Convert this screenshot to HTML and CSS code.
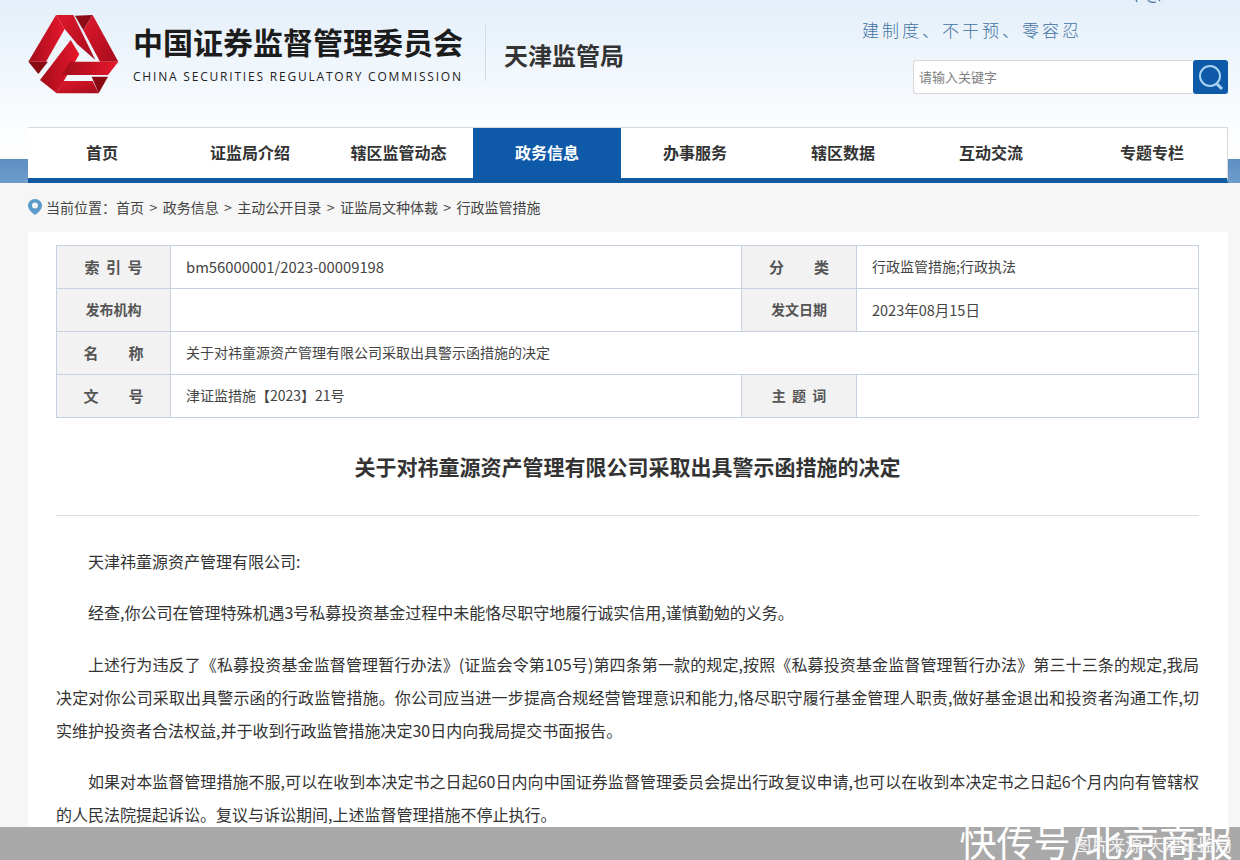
FILE: index.html
```html
<!DOCTYPE html>
<html lang="zh-CN">
<head>
    <meta charset="UTF-8">
    <title>关于对祎童源资产管理有限公司采取出具警示函措施的决定</title>
    <link rel="stylesheet" href="styles.css">
</head>
<body>
    <svg class="top-scrap" viewBox="0 0 30 3" width="30" height="3">
        <path d="M1 0l1 2M13 0c1 2 5 3 8 2M24 0l1 1" fill="none" stroke="#3f72a3" stroke-width="1.200"/>
    </svg>
    <header class="top">
        <div class="brand">
            <svg class="logo" viewBox="0 0 330 300" width="110" height="100">
                <defs>
                    <linearGradient id="redA" x1="0" y1="0" x2="1" y2="1">
                        <stop offset="0" stop-color="#e0182c"/>
                        <stop offset="1" stop-color="#a50d1c"/>
                    </linearGradient>
                    <linearGradient id="redB" x1="0" y1="0" x2="1" y2="0">
                        <stop offset="0" stop-color="#a30d1b"/>
                        <stop offset="1" stop-color="#e8172c"/>
                    </linearGradient>
                </defs>
                <polygon points="108,30 134,72 78,170 25,170" fill="url(#redB)"/>
                <polygon points="25,170 84,170 55,207" fill="#8a0a14"/>
                <polygon points="108,30 160,30 226,165 172,118 134,72" fill="url(#redA)"/>
                <polygon points="165,32 218,30 190,76" fill="#8c0b16"/>
                <polygon points="218,30 295,170 240,170 190,76" fill="url(#redA)"/>
                <polygon points="152,105 178,148 110,265 60,225" fill="url(#redB)"/>
                <polygon points="150,170 295,170 264,210 125,210" fill="url(#redB)"/>
                <polygon points="110,265 130,228 218,228 236,265" fill="url(#redA)"/>
                <polygon points="215,215 264,215 236,265" fill="#8a0a14"/>
            </svg>
            <div class="brand-name">
                <div class="brand-cn">中国证券监督管理委员会</div>
                <div class="brand-en">CHINA SECURITIES REGULATORY COMMISSION</div>
            </div>
            <div class="brand-sub">天津监管局</div>
        </div>
        <div class="top-right">
            <div class="slogan">建制度、不干预、零容忍</div>
            <div class="search">
                <div class="search-input">请输入关键字</div>
                <button class="search-btn">
                    <svg viewBox="0 0 35 34" width="35" height="34">
                        <circle cx="17" cy="16" r="10" fill="none" stroke="#a9d3f2" stroke-width="2"/>
                        <line x1="24" y1="24" x2="29" y2="29" stroke="#a9d3f2" stroke-width="3"/>
                    </svg>
                </button>
            </div>
        </div>
    </header>

    <div class="nav-wrap">
        <nav class="nav">
            <a>首页</a>
            <a>证监局介绍</a>
            <a>辖区监管动态</a>
            <a class="active">政务信息</a>
            <a>办事服务</a>
            <a>辖区数据</a>
            <a>互动交流</a>
            <a class="last">专题专栏</a>
        </nav>
    </div>

    <div class="crumb">
        <svg viewBox="0 0 14 16" width="14" height="16">
            <path d="M7 0C3 0 0 3 0 6.6 0 10.5 4 14 7 16c3-2 7-5.500 7-9.400C14 3 11 0 7 0z" fill="#5b9bc9"/>
            <circle cx="7" cy="6.500" r="3" fill="#f6f6f6"/>
        </svg>
        <span>当前位置：</span>
        <span class="crumb-links">首页 &gt; 政务信息 &gt; 主动公开目录 &gt; 证监局文种体裁 &gt; 行政监管措施</span>
    </div>

    <main class="card">
        <table class="meta">
            <colgroup>
                <col class="c1"><col class="c2"><col class="c3"><col class="c4">
            </colgroup>
            <tr>
                <th>索 引 号</th>
                <td class="num">bm56000001/2023-00009198</td>
                <th>分&emsp;&emsp;类</th>
                <td>行政监管措施;行政执法</td>
            </tr>
            <tr>
                <th class="tight">发布机构</th>
                <td></td>
                <th class="tight">发文日期</th>
                <td class="date">2023年08月15日</td>
            </tr>
            <tr>
                <th>名&emsp;&emsp;称</th>
                <td colspan="3">关于对祎童源资产管理有限公司采取出具警示函措施的决定</td>
            </tr>
            <tr>
                <th>文&emsp;&emsp;号</th>
                <td>津证监措施【2023】21号</td>
                <th class="tight">主 题 词</th>
                <td></td>
            </tr>
        </table>

        <h1 class="title">关于对祎童源资产管理有限公司采取出具警示函措施的决定</h1>

        <div class="article">
            <p>天津祎童源资产管理有限公司:</p>
            <p>经查,你公司在管理特殊机遇3号私募投资基金过程中未能恪尽职守地履行诚实信用,谨慎勤勉的义务。</p>
            <p>上述行为违反了《私募投资基金监督管理暂行办法》(证监会令第105号)第四条第一款的规定,按照《私募投资基金监督管理暂行办法》第三十三条的规定,我局决定对你公司采取出具警示函的行政监管措施。你公司应当进一步提高合规经营管理意识和能力,恪尽职守履行基金管理人职责,做好基金退出和投资者沟通工作,切实维护投资者合法权益,并于收到行政监管措施决定30日内向我局提交书面报告。</p>
            <p>如果对本监督管理措施不服,可以在收到本决定书之日起60日内向中国证券监督管理委员会提出行政复议申请,也可以在收到本决定书之日起6个月内向有管辖权的人民法院提起诉讼。复议与诉讼期间,上述监督管理措施不停止执行。</p>
        </div>
    </main>

    <div class="credit">
        <span class="credit-mark">快传号/北京商报</span>
        <span class="credit-src">图片来源:天津证监局</span>
    </div>
</body>
</html>
```

FILE: styles.css
```css
html, body {
    height: 860px;
    overflow: hidden;
}
body {
    margin: 0;
    position: relative;
    background: #f6f6f6;
    color: #333;
    font-family: "Noto Sans CJK SC", "Liberation Sans", sans-serif;
}
.top-scrap {
    position: absolute;
    left: 1135px;
    top: 0;
}
.top {
    height: 127px;
    display: flex;
    justify-content: space-between;
    padding: 0 12px 0 20px;
    background: linear-gradient(#e4eff9, #fbfdff);
}
.top + .nav-wrap {
    background: linear-gradient(#fbfdff, #ffffff 32px, #5e8fc3 32px, #6e9ccb);
}
.brand {
    display: flex;
    align-items: flex-start;
    padding-top: 5px;
}
.brand-name {
    margin-left: 3px;
    padding-top: 14px;
    width: 330px;
}
.brand-cn {
    font-size: 30px;
    line-height: 44px;
    font-weight: 700;
    color: #1c1c1c;
    white-space: nowrap;
}
.brand-en {
    margin-top: 6px;
    font-family: "Open Sans", "Liberation Sans", sans-serif;
    font-size: 12px;
    line-height: 16px;
    letter-spacing: 1.800px;
    color: #222;
    white-space: nowrap;
}
.brand-sub {
    margin: 20px 0 0 22px;
    height: 56px;
    padding-left: 18px;
    border-left: 1px solid #d5dbe2;
    font-size: 24px;
    line-height: 59px;
    font-weight: 700;
    color: #333;
}
.top-right {
    width: 315px;
    display: flex;
    flex-direction: column;
}
.slogan {
    margin: 18px 0 0 -51px;
    font-size: 17px;
    line-height: 24px;
    letter-spacing: 3px;
    font-weight: 300;
    color: #3f72a3;
    white-space: nowrap;
}
.search {
    margin-top: 18px;
    display: flex;
    height: 34px;
}
.search-input {
    flex: 1;
    box-sizing: border-box;
    padding-left: 5px;
    background: #fff;
    border: 1px solid #d8d8d8;
    border-right: none;
    border-radius: 3px 0 0 3px;
    font-size: 13px;
    line-height: 32px;
    color: #808080;
}
.search-btn {
    width: 35px;
    height: 34px;
    padding: 0;
    border: none;
    border-radius: 3px;
    background: #0f5aa8;
}
.nav-wrap {
    height: 56px;
    padding: 0 12px 0 28px;
}
.nav {
    box-sizing: border-box;
    height: 56px;
    display: grid;
    grid-template-columns: 148px 148px 149px repeat(4, 148px) 1fr;
    background: #fff;
    border-top: 1px solid #d9d9d9;
    border-right: 1px solid #d9d9d9;
    border-bottom: 5px solid #0f5aa0;
}
.nav a {
    text-align: center;
    font-size: 16px;
    line-height: 49px;
    font-weight: 700;
    color: #333;
}
.nav a.active {
    background: #0f5aa8;
    color: #fff;
    height: 50px;
}
.nav a.last {
    padding-left: 12px;
}
.crumb {
    box-sizing: border-box;
    height: 49px;
    padding: 0 0 2px 28px;
    display: flex;
    align-items: center;
    font-size: 14px;
    color: #444;
}
.crumb svg {
    margin-right: 4px;
}
.crumb-links {
    word-spacing: 2.300px;
}
.card {
    box-sizing: border-box;
    width: 1200px;
    margin-left: 28px;
    height: 628px;
    padding: 13px 29px 0 28px;
    background: #fff;
}
.meta {
    width: 1143px;
    table-layout: fixed;
    border-collapse: collapse;
    font-size: 14px;
    color: #444;
}
.meta .c1 { width: 114px; }
.meta .c2 { width: 571px; }
.meta .c3 { width: 115px; }
.meta th, .meta td {
    height: 40px;
    padding: 0 0 2px;
    border: 1px solid #c5d2de;
}
.meta th {
    background: #f2f2f2;
    font-size: 15px;
    font-weight: 700;
    word-spacing: 3px;
    color: #555;
}
.meta th.tight {
    font-size: 14px;
}
.meta td {
    padding-left: 15px;
}
.meta td.num {
    font-size: 14.800px;
}
.meta td.date {
    font-size: 14.500px;
}
.title {
    margin: 0;
    padding: 28px 0 29px;
    border-bottom: 1px solid #ddd;
    text-align: center;
    font-size: 21px;
    line-height: 40px;
    font-weight: 700;
    color: #333;
}
.article {
    padding-top: 29px;
    font-size: 16px;
    line-height: 33px;
    color: #333;
    text-align: justify;
}
.article p {
    margin: 0 0 18.400px;
    text-indent: 32px;
}
.article p:last-child {
    margin-bottom: 0;
}
.credit {
    position: absolute;
    left: 0;
    right: 0;
    bottom: 0;
    height: 33px;
    background: #a9a9a9;
}
.credit-mark {
    position: absolute;
    right: 7px;
    top: -5px;
    font-size: 37px;
    line-height: 38px;
    color: #fff;
    white-space: nowrap;
}
.credit-src {
    position: absolute;
    right: 8px;
    top: 6px;
    font-size: 17px;
    line-height: 22px;
    color: #f3f3f3;
    white-space: nowrap;
}
```
